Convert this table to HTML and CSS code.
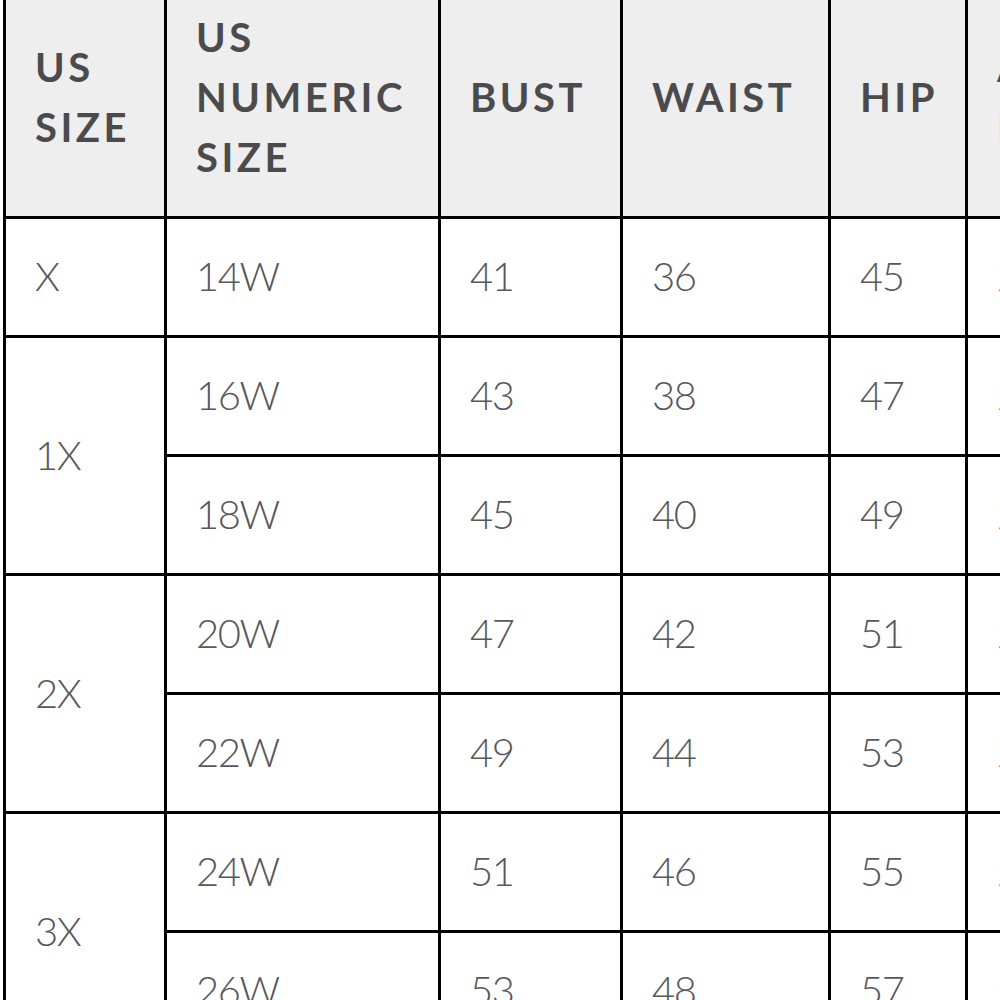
FILE: index.html
```html
<!DOCTYPE html>
<html>
<head>
<meta charset="utf-8">
<link rel="stylesheet" href="styles.css">
</head>
<body>
<div class="frame">
<table class="chart">
  <colgroup>
    <col class="c1"><col class="c2"><col class="c3"><col class="c4"><col class="c5"><col class="c6">
  </colgroup>
  <thead>
    <tr>
      <th>US<br>SIZE</th>
      <th>US<br>NUMERIC<br>SIZE</th>
      <th>BUST</th>
      <th>WAIST</th>
      <th>HIP</th>
      <th>ARM<br>LENGTH</th>
    </tr>
  </thead>
  <tbody>
    <tr><td>X</td><td>14W</td><td>41</td><td>36</td><td>45</td><td>23</td></tr>
    <tr><td rowspan="2">1X</td><td>16W</td><td>43</td><td>38</td><td>47</td><td>23</td></tr>
    <tr><td>18W</td><td>45</td><td>40</td><td>49</td><td>23</td></tr>
    <tr><td rowspan="2">2X</td><td>20W</td><td>47</td><td>42</td><td>51</td><td>24</td></tr>
    <tr><td>22W</td><td>49</td><td>44</td><td>53</td><td>24</td></tr>
    <tr><td rowspan="2">3X</td><td>24W</td><td>51</td><td>46</td><td>55</td><td>24</td></tr>
    <tr><td>26W</td><td>53</td><td>48</td><td>57</td><td>24</td></tr>
  </tbody>
</table>
</div>
</body>
</html>
```
FILE: styles.css
```css
html, body {
  margin: 0;
  padding: 0;
  background: #ffffff;
  overflow: hidden;
}
.frame {
  width: 1000px;
  height: 1000px;
  overflow: hidden;
  padding-left: 3px;
  box-sizing: border-box;
}
.chart {
  border-collapse: collapse;
  table-layout: fixed;
  width: 1162px;
  margin-top: -23px;
  font-family: Lato, "Liberation Sans", sans-serif;
  font-size: 40px;
  line-height: 60px;
}
.c1 { width: 161px; }
.c2 { width: 274px; }
.c3 { width: 182px; }
.c4 { width: 208px; }
.c5 { width: 137px; }
.c6 { width: 200px; }
.chart th, .chart td {
  border: 3px solid #000;
  padding: 27px 10px 29px 29px;
  text-align: left;
  vertical-align: middle;
  white-space: nowrap;
}
.chart th {
  background: #eeeeee;
  color: #4b4b4d;
  font-weight: 700;
  letter-spacing: 3.5px;
}
.chart td {
  color: #58585a;
  font-weight: 300;
  letter-spacing: -1.5px;
}
```
